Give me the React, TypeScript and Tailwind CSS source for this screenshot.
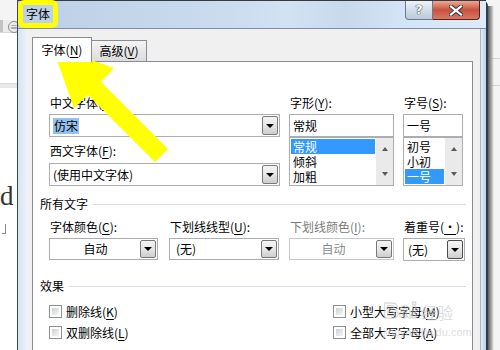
import React from "react";

const ul = "underline decoration-1 underline-offset-[2px]";

function DropButton({ dark }: { dark?: boolean }) {
    return (
        <div
            className={`flex h-full w-[16px] shrink-0 items-center justify-center rounded-[2px] border ${dark ? "border-[#4d4d4d]" : "border-[#7a7a7a]"} bg-linear-to-b from-[#f4f4f4] via-[#e7e7e7] to-[#cdcdcd]`}
        >
            <div className="h-0 w-0 border-x-[4px] border-t-[4px] border-x-transparent border-t-black" />
        </div>
    );
}

function Combo({
    className,
    children,
    center,
    disabled,
    dark,
}: {
    className: string;
    children: React.ReactNode;
    center?: boolean;
    disabled?: boolean;
    dark?: boolean;
}) {
    return (
        <div
            className={`flex items-stretch border bg-white p-px ${disabled ? "border-[#c4c7cc]" : "border-[#abadb3]"} ${className}`}
        >
            <div
                className={`flex min-w-0 flex-1 items-center ${center ? "justify-center" : "pl-[2px]"} ${disabled ? "text-[#8a8a8a]" : ""}`}
            >
                {children}
            </div>
            <DropButton dark={dark} />
        </div>
    );
}

function ScrollBar() {
    return (
        <div className="flex w-[17px] shrink-0 flex-col justify-between bg-[#eaeaea] py-[9px]">
            <div className="flex justify-center">
                <div className="h-0 w-0 border-x-[3.5px] border-b-[4px] border-x-transparent border-b-[#5a5a5a]" />
            </div>
            <div className="flex justify-center">
                <div className="h-0 w-0 border-x-[3.5px] border-t-[4px] border-x-transparent border-t-[#5a5a5a]" />
            </div>
        </div>
    );
}

function ListBox({ items, selected, className }: { items: string[]; selected: number; className: string }) {
    return (
        <div className={`flex h-[49px] border border-[#abadb3] bg-white ${className}`}>
            <div className="flex flex-1 flex-col p-px">
                {items.map((item, i) => (
                    <div
                        key={item}
                        className={`h-[15px] pl-[2px] leading-[15px] ${i === selected ? "bg-[#3399ff] text-white" : ""}`}
                    >
                        {item}
                    </div>
                ))}
            </div>
            <ScrollBar />
        </div>
    );
}

function Check({ children }: { children: React.ReactNode }) {
    return (
        <div className="flex h-[21px] items-center gap-[4px]">
            <div className="h-[13px] w-[13px] border border-[#8e8f8f] bg-white p-[2px]">
                <div className="h-full w-full bg-linear-to-br from-[#cdd0d4] to-[#f7f7f7]" />
            </div>
            <span className="leading-[14px]">{children}</span>
        </div>
    );
}

function SectionTitle({ children }: { children: React.ReactNode }) {
    return (
        <div className="flex items-center pl-[7px] pr-[6px]">
            <span className="leading-[14px]">{children}</span>
            <div className="ml-[5px] h-px flex-1 bg-[#d5dfe5]" />
        </div>
    );
}

function LeftDesk() {
    return (
        <div className="flex w-[17px] shrink-0 flex-col overflow-hidden bg-white">
            <div className="h-[20px] bg-[#f4f4f4]" />
            <div className="relative h-[13px] border-b border-[#d6d6d6] bg-[#ececec]">
                <div className="h-full w-[3px] bg-[#c4c4c4]" />
                <div className="absolute left-[8px] top-[1px] flex h-[12px] w-[12px] items-center justify-center rounded-full border border-[#8a8a8a] text-[8px] leading-none text-[#777]">
                    ≡
                </div>
            </div>
            <div className="h-[50px]" />
            <div className="h-[5px] border-t border-[#d8d8d8] bg-[#e9e9e9]" />
            <div className="h-[93px]" />
            <div className="-ml-[9px] font-['Liberation_Serif',serif] text-[27px] leading-[30px] text-[#333]">rd</div>
            <div className="ml-[2px] mt-[13px] h-[10px] w-[4px] border-b border-r border-[#8a8a8a]" />
        </div>
    );
}

function RightDesk() {
    return (
        <div className="relative flex w-[12px] shrink-0 flex-col bg-[#f4f4f4]">
            <div className="h-[58px]" />
            <div className="h-px bg-[#d3d3d3]" />
            <div className="h-[26px]" />
            <div className="h-px bg-[#d3d3d3]" />
            <div className="absolute bottom-0 left-0 top-[6px] w-[6px] bg-linear-to-r from-[#5e5e5e] via-[#a0a0a0] to-transparent" />
        </div>
    );
}

function TitleBar() {
    return (
        <div className="flex h-[29px] shrink-0 items-start border-b border-t border-b-[#7f8da0] border-t-[#3a3a3a] bg-[linear-gradient(90deg,#bcd0e6_0%,#c3d6ea_25%,#cbdcef_45%,#d2e2f3_58%,#c8d9ec_70%,#d7e6f7_85%,#dceaf9_100%)]">
            <div className="pl-[8px] pt-[6px] leading-[14px]">字体</div>
            <div className="ml-auto mr-[6px] flex">
                <div className="flex h-[19px] w-[28px] items-center justify-center rounded-bl-[4px] border border-t-0 border-[#6d7b8c] bg-linear-to-b from-[#eef3f9] via-[#d2dde9] to-[#bccbdb] font-['DejaVu_Sans',sans-serif] text-[13px] font-bold text-white [text-shadow:0_0_1px_#222,0_0_1px_#222]">
                    ?
                </div>
                <div className="flex h-[19px] w-[47px] items-center justify-center rounded-br-[4px] border border-l-0 border-t-0 border-[#5b2118] bg-linear-to-b from-[#e9a898] via-[#c9503e] to-[#d77a66]">
                    <svg width="14" height="11" viewBox="0 0 14 11">
                        <path
                            d="M2 1.5 L12 9.5 M12 1.5 L2 9.5"
                            stroke="#3b3b3b"
                            strokeWidth="4.2"
                            strokeLinecap="square"
                        />
                        <path
                            d="M2 1.5 L12 9.5 M12 1.5 L2 9.5"
                            stroke="#ffffff"
                            strokeWidth="2.2"
                            strokeLinecap="square"
                        />
                    </svg>
                </div>
            </div>
        </div>
    );
}

function FontTab() {
    return (
        <div className="flex flex-col border border-b-0 border-[#898c95] bg-white">
            <div className="h-[34px]" />

            <div className="flex gap-[9px] pl-[16px]">
                <div className="flex w-[231px] flex-col">
                    <div className="pl-px leading-[14px]">
                        中文字体(<span className={ul}>T</span>):
                    </div>
                    <Combo className="mt-[4px] h-[23px]">
                        <span className="bg-[#93c0ee] px-px leading-[16px]">仿宋</span>
                    </Combo>
                    <div className="mt-[7px] pl-px leading-[14px]">
                        西文字体(<span className={ul}>F</span>):
                    </div>
                    <Combo className="mt-[5px] h-[23px]">(使用中文字体)</Combo>
                </div>
                <div className="flex w-[105px] flex-col">
                    <div className="pl-px leading-[14px]">
                        字形(<span className={ul}>Y</span>):
                    </div>
                    <div className="mt-[4px] flex h-[23px] items-center border border-[#abadb3] bg-white pl-[3px]">常规</div>
                    <ListBox items={["常规", "倾斜", "加粗"]} selected={0} className="" />
                </div>
                <div className="flex w-[60px] flex-col">
                    <div className="pl-px leading-[14px]">
                        字号(<span className={ul}>S</span>):
                    </div>
                    <div className="mt-[4px] flex h-[23px] items-center border border-[#abadb3] bg-white pl-[3px]">一号</div>
                    <ListBox items={["初号", "小初", "一号"]} selected={2} className="" />
                </div>
            </div>

            <div className="mt-[11px]">
                <SectionTitle>所有文字</SectionTitle>
            </div>

            <div className="mt-[9px] flex pl-[16px]">
                <div className="flex w-[109px] flex-col">
                    <div className="pl-px leading-[14px]">
                        字体颜色(<span className={ul}>C</span>):
                    </div>
                    <Combo className="mt-[4px] h-[22px]" center>
                        自动
                    </Combo>
                </div>
                <div className="ml-[11px] flex w-[110px] flex-col">
                    <div className="pl-px leading-[14px]">
                        下划线线型(<span className={ul}>U</span>):
                    </div>
                    <Combo className="mt-[4px] h-[22px]">
                        <span className="pl-[3px]">(无)</span>
                    </Combo>
                </div>
                <div className="ml-[10px] flex w-[105px] flex-col">
                    <div className="pl-px leading-[14px] text-[#7a7a7a]">
                        下划线颜色(<span className={ul}>I</span>):
                    </div>
                    <Combo className="mt-[4px] h-[22px]" center disabled>
                        自动
                    </Combo>
                </div>
                <div className="ml-[9px] flex w-[62px] flex-col">
                    <div className="pl-px leading-[14px]">
                        着重号(<span className={ul}>·</span>):
                    </div>
                    <Combo className="mt-[4px] h-[23px] border-[#8e8e8e]" dark>
                        <span className="pl-px">(无)</span>
                    </Combo>
                </div>
            </div>

            <div className="mt-[18px]">
                <SectionTitle>效果</SectionTitle>
            </div>

            <div className="mt-[8px] flex pb-[20px] pl-[16px]">
                <div className="flex w-[284px] flex-col">
                    <Check>
                        删除线(<span className={ul}>K</span>)
                    </Check>
                    <Check>
                        双删除线(<span className={ul}>L</span>)
                    </Check>
                </div>
                <div className="flex flex-col">
                    <Check>
                        小型大写字母(<span className={ul}>M</span>)
                    </Check>
                    <Check>
                        全部大写字母(<span className={ul}>A</span>)
                    </Check>
                </div>
            </div>
        </div>
    );
}

function Window() {
    return (
        <div className="flex w-[471px] shrink-0 flex-col rounded-tr-[6px] border-l border-r-2 border-l-[#3c4756] border-r-[#333d49]">
            <TitleBar />
            <div className="flex flex-1">
                <div className="w-[10px] shrink-0 bg-linear-to-r from-[#d6e3f1] to-[#eef4fa]" />
                <div className="flex flex-1 flex-col bg-[#f0f0f0] pl-[4px] pr-[7px] pt-[8px]">
                    <div className="flex h-[24px] items-end">
                        <div className="relative z-10 -mb-px flex h-[25px] w-[60px] items-center justify-center border border-b-0 border-[#898c95] bg-white leading-[14px]">
                            字体(<span className={ul}>N</span>)
                        </div>
                        <div className="flex h-[21px] w-[55px] items-center justify-center border border-b-0 border-l-0 border-[#898c95] bg-linear-to-b from-[#f4f4f4] to-[#dcdcdc] leading-[14px]">
                            高级(<span className={ul}>V</span>)
                        </div>
                    </div>
                    <FontTab />
                </div>
                <div className="w-[6px] shrink-0 border-l border-[#a9b6c4] bg-linear-to-r from-[#e4edf7] to-[#b8d0ec]" />
            </div>
        </div>
    );
}

export default function App() {
    return (
        <div className="relative flex h-[350px] w-[500px] overflow-hidden bg-white font-['Noto_Sans_CJK_SC',sans-serif] text-[12px] text-black">
            <LeftDesk />
            <Window />
            <RightDesk />

            {/* highlight box round the title */}
            <div className="pointer-events-none absolute left-[18px] top-0 h-[28px] w-[40px] rounded-[6px] border-[5px] border-[#ffff00]" />

            {/* pointing arrow */}
            <svg className="pointer-events-none absolute left-0 top-0" width="500" height="350" viewBox="0 0 500 350">
                <polygon
                    points="52,46 114,68 101,82 168,149 155,162 88,95 74,108"
                    fill="#ffff00"
                />
            </svg>

            {/* site watermark */}
            <div className="pointer-events-none absolute left-[383px] top-[300px] flex flex-col opacity-70">
                <div className="flex items-end gap-[4px]">
                    <span className="font-['Liberation_Sans',sans-serif] text-[22px] font-bold leading-[22px] text-transparent [-webkit-text-stroke:1px_#c4c4c4]">
                        Bai
                    </span>
                    <span className="text-[16px] leading-[20px] text-[#cfcfcf]">经验</span>
                </div>
                <span className="mt-[4px] self-end font-['Liberation_Sans',sans-serif] text-[11px] leading-[12px] text-[#d2d2d2]">
                    jingyan.baidu.com
                </span>
            </div>
        </div>
    );
}
